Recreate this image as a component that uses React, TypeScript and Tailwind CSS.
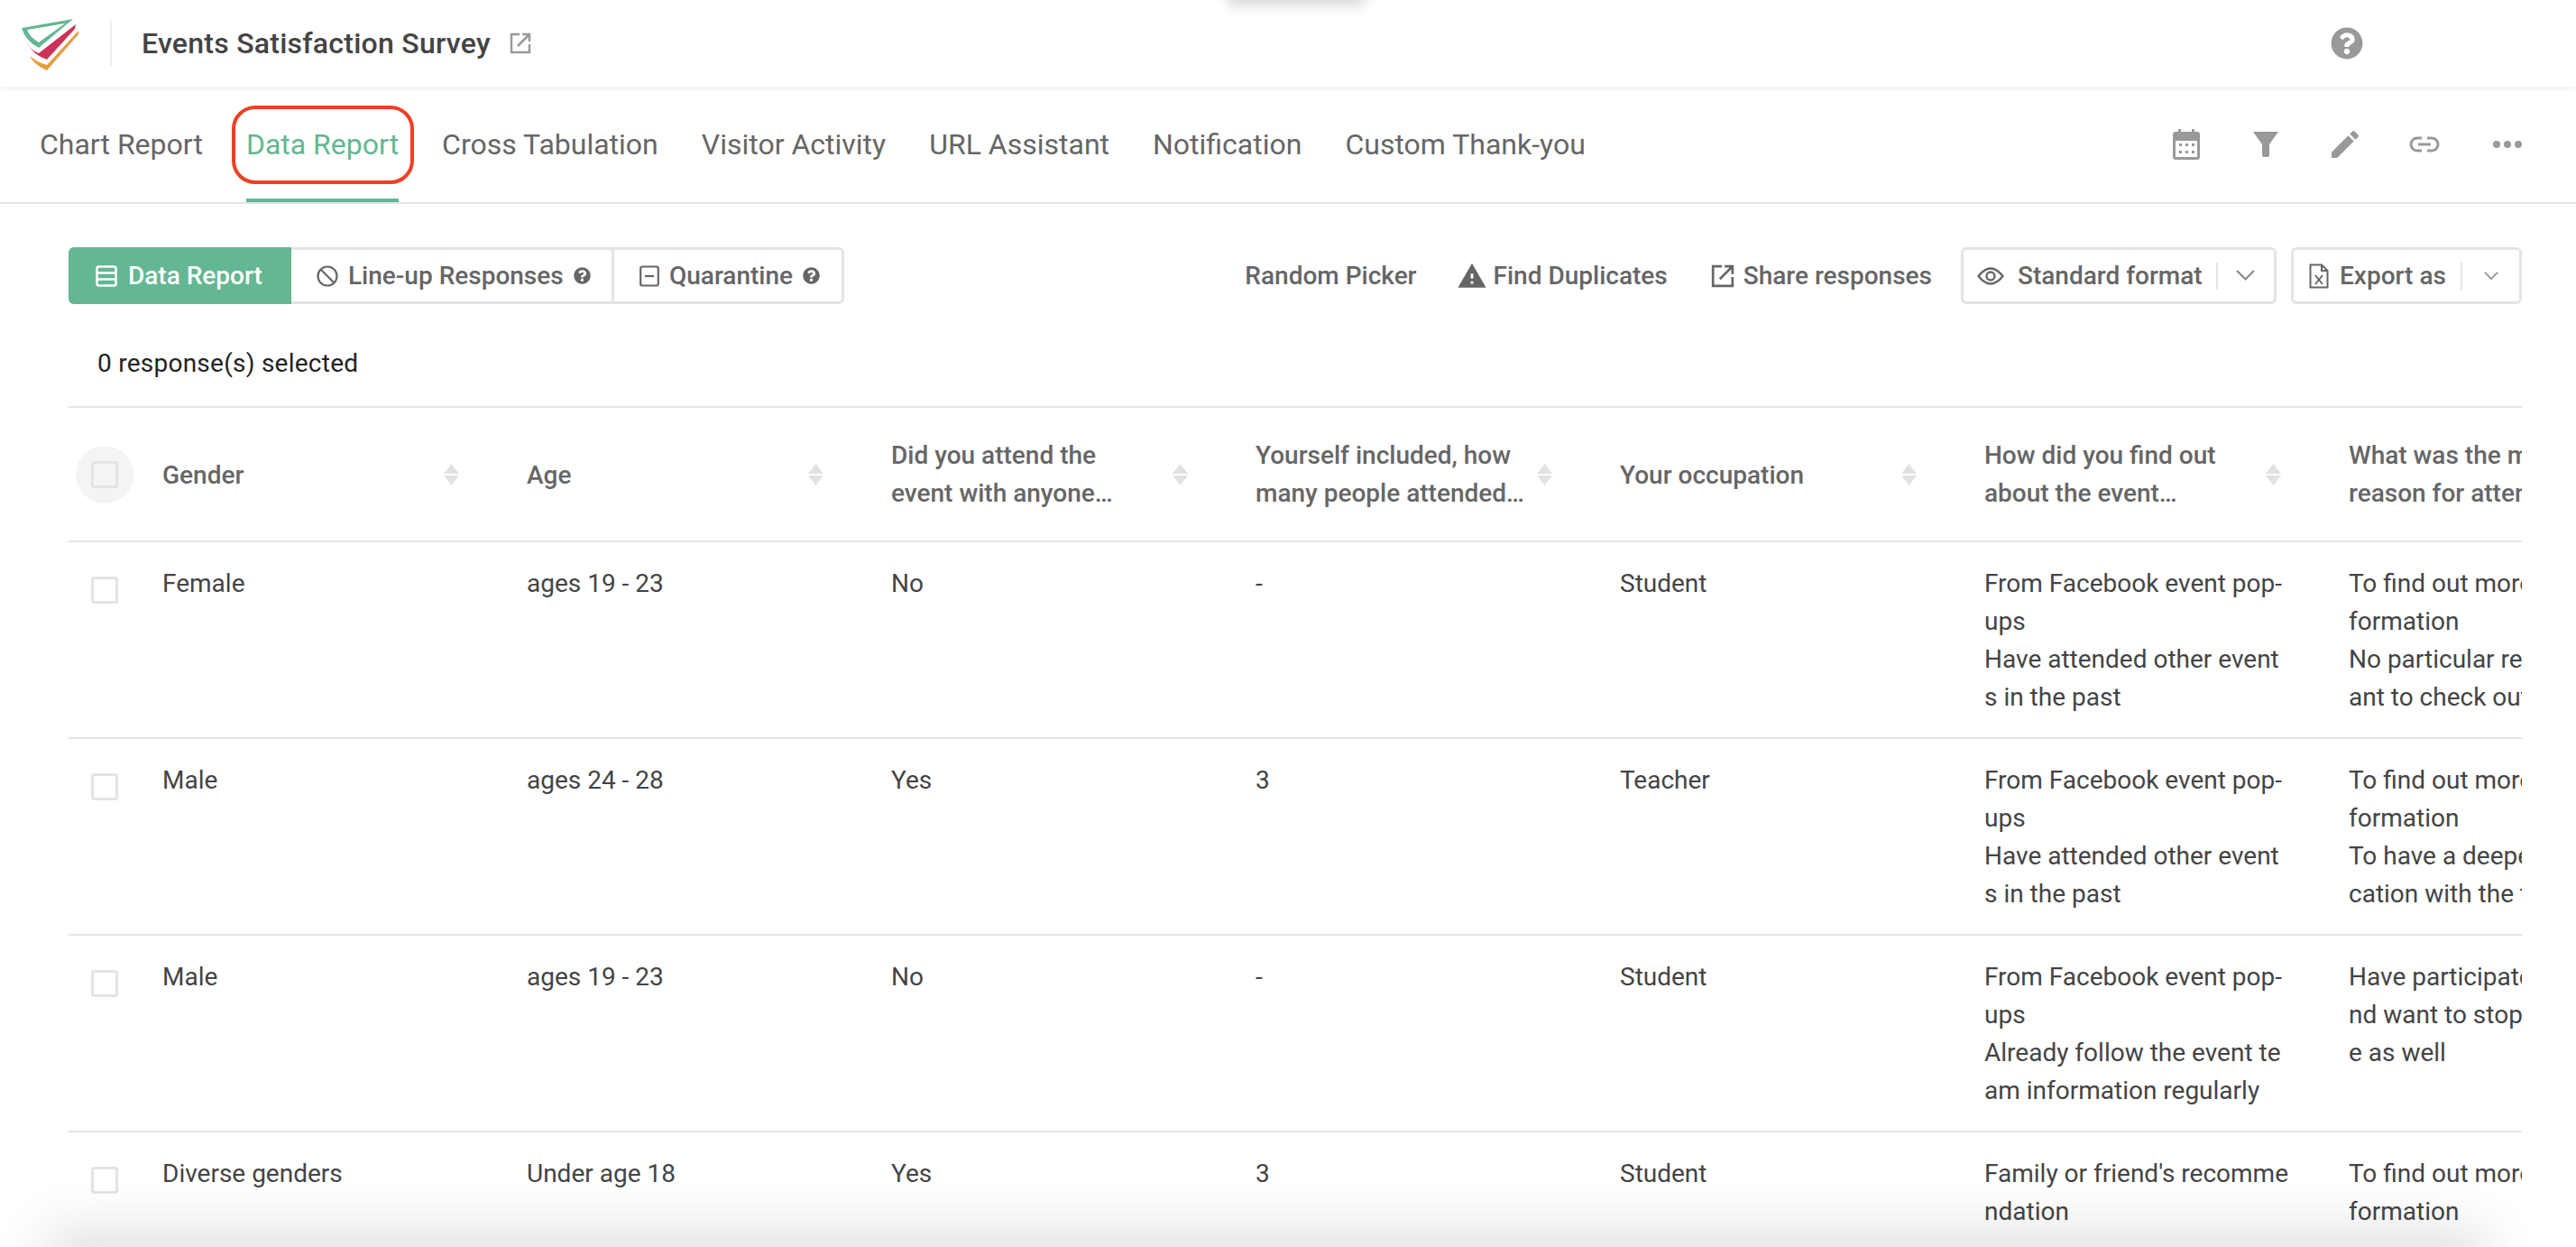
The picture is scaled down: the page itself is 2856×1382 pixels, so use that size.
import { FaQuestionCircle } from "react-icons/fa";
import { MdWarning, MdEdit } from "react-icons/md";

const tabs = ["Chart Report", "Data Report", "Cross Tabulation", "Visitor Activity", "URL Assistant", "Notification", "Custom Thank-you"];

const columns = [
  ["Gender"],
  ["Age"],
  ["Did you attend the", "event with anyone…"],
  ["Yourself included, how", "many people attended…"],
  ["Your occupation"],
  ["How did you find out", "about the event…"],
  ["What was the main", "reason for attending"],
];

const rows = [
  ["Female", "ages 19 - 23", "No", "-", "Student", ["From Facebook event pop-", "ups", "Have attended other event", "s in the past"], ["To find out more in", "formation", "No particular reason, I w", "ant to check out"]],
  ["Male", "ages 24 - 28", "Yes", "3", "Teacher", ["From Facebook event pop-", "ups", "Have attended other event", "s in the past"], ["To find out more in", "formation", "To have a deeper communi", "cation with the team"]],
  ["Male", "ages 19 - 23", "No", "-", "Student", ["From Facebook event pop-", "ups", "Already follow the event te", "am information regularly"], ["Have participated before a", "nd want to stop by this tim", "e as well"]],
  ["Diverse genders", "Under age 18", "Yes", "3", "Student", ["Family or friend's recomme", "ndation"], ["To find out more in", "formation"]],
];

function Logo() {
  return (
    <svg width="66" height="60" viewBox="0 0 66 60" className="mt-[4px] shrink-0">
      <path d="M0 11 L57 1 L19 33 Q4 25 0 11 Z M6 13 Q9 21 19 27 L48 6 Z" fill="#63b792" fillRule="evenodd" />
      <path d="M5 27 Q9 35 19 39 L60 7 L59 12 L28 46 Q13 41 5 27 Z" fill="#cb3358" />
      <path d="M9 42 Q17 49 28 52 L63 14 L63 18 L28 58 Q14 52 9 42 Z" fill="#e59c3f" />
    </svg>
  );
}

function ExternalIcon({ className }: { className: string }) {
  return (
    <svg viewBox="0 0 24 24" className={className} fill="none" stroke="currentColor" strokeWidth="2.5">
      <path d="M11 2 H2 V22 H22 V13" />
      <path d="M9 15 L21 3 M14 2 H22 V10" />
    </svg>
  );
}

function CalendarIcon() {
  return (
    <svg width="30" height="34" viewBox="0 0 30 34" fill="#999">
      <path fillRule="evenodd" d="M6 0 H9 V3 H21 V0 H24 V3 H27 Q30 3 30 6 V31 Q30 34 27 34 H3 Q0 34 0 31 V6 Q0 3 3 3 H6 Z M3 13 V31 H27 V13 Z" />
      <path d="M7 16 H10 V19 H7 Z M14 16 H17 V19 H14 Z M21 16 H24 V19 H21 Z M7 24 H10 V27 H7 Z M14 24 H17 V27 H14 Z M21 24 H24 V27 H21 Z" />
    </svg>
  );
}

function FilterIcon() {
  return (
    <svg width="28" height="28" viewBox="0 0 28 28" fill="#999">
      <path d="M0 0 H28 L18 14 V26 Q18 28 16 28 H12 Q10 28 10 26 V14 Z" />
    </svg>
  );
}

function LinkIcon() {
  return (
    <svg width="34" height="18" viewBox="0 0 34 18" fill="none" stroke="#999" strokeWidth="3">
      <path d="M14 2 H9 A7 7 0 0 0 9 16 H14 M20 2 H25 A7 7 0 0 1 25 16 H20" />
      <path d="M10 9 H24" />
    </svg>
  );
}

function DotsIcon() {
  return (
    <svg width="32" height="10" viewBox="0 0 32 10" fill="#999">
      <circle cx="4" cy="5" r="4" />
      <circle cx="16" cy="5" r="4" />
      <circle cx="28" cy="5" r="4" />
    </svg>
  );
}

function SortArrows() {
  return (
    <svg width="17" height="24" viewBox="0 0 17 24" fill="#e2e2e2" className="shrink-0">
      <path d="M8.5 0 L17 11 H0 Z M0 13 H17 L8.5 24 Z" />
    </svg>
  );
}

function Checkbox() {
  return <div className="w-[30px] h-[30px] border-[3px] border-[#e4e4e4] rounded-[3px] bg-white" />;
}

function GridIcon() {
  return (
    <svg width="24" height="24" viewBox="0 0 24 24" fill="none" stroke="#fff" strokeWidth="2.5">
      <rect x="1.5" y="1.5" width="21" height="21" rx="2" />
      <path d="M1.5 8.5 H22.5 M1.5 15.5 H22.5" />
    </svg>
  );
}

function BanIcon() {
  return (
    <svg width="24" height="24" viewBox="0 0 24 24" fill="none" stroke="#666" strokeWidth="2.2">
      <circle cx="12" cy="12" r="10.5" />
      <path d="M5 5 L19 19" />
    </svg>
  );
}

function MinusBoxIcon() {
  return (
    <svg width="22" height="24" viewBox="0 0 22 24" fill="none" stroke="#666" strokeWidth="2.2">
      <rect x="1.2" y="1.5" width="19.6" height="21" rx="2" />
      <path d="M6 12 H16" />
    </svg>
  );
}

function EyeIcon() {
  return (
    <svg width="30" height="22" viewBox="0 0 30 22" fill="none" stroke="#666" strokeWidth="2.4">
      <path d="M1.5 11 Q15 -6 28.5 11 Q15 28 1.5 11 Z" />
      <circle cx="15" cy="11" r="4.5" />
    </svg>
  );
}

function XlsIcon() {
  return (
    <svg width="22" height="28" viewBox="0 0 22 28" fill="none" stroke="#666" strokeWidth="2">
      <path d="M1.5 1.5 H14 L20.5 8 V26.5 H1.5 Z M14 1.5 V8 H20.5" />
      <path d="M7 13 L15 23 M15 13 L7 23" />
    </svg>
  );
}

function Chevron({ size }: { size: number }) {
  return (
    <svg width={size} height={size * 0.6} viewBox="0 0 20 12" fill="none" stroke="#888" strokeWidth="2">
      <path d="M1 1 L10 10 L19 1" />
    </svg>
  );
}

export default function App() {
  return (
    <div className="relative h-[1382px] w-[2856px] overflow-hidden bg-white font-[family-name:Roboto,sans-serif]">
      {/* top bar */}
      <header className="flex h-[96px] items-center shadow-[0_3px_6px_rgba(0,0,0,0.06)]">
        <div className="ml-6 flex items-center">
          <Logo />
          <div className="ml-[32px] h-[50px] w-[2px] bg-[#eeeeee]" />
        </div>
        <h1 className="ml-[33px] text-[32px] font-medium tracking-[0.25px] text-[#444]">Events Satisfaction Survey</h1>
        <ExternalIcon className="ml-[21px] h-6 w-6 text-[#999]" />
        <FaQuestionCircle className="ml-auto mr-[236px] text-[36px] text-[#999]" />
      </header>

      {/* tabs */}
      <nav className="flex h-[130px] items-stretch justify-between border-b-2 border-[#e4e4e4] pl-[44px] pr-[60px]">
        <div className="flex gap-12">
          {tabs.map((t) => (
            <div key={t} className={t === "Data Report" ? "relative flex items-center border-b-4 border-[#63b792] pt-[4px] text-[32px] text-[#63b792]" : "flex items-center border-b-4 border-transparent pt-[4px] text-[32px] text-[#666]"}>
              {t}
              {t === "Data Report" && <div className="absolute left-[-16px] top-[21px] h-[87px] w-[202px] rounded-[26px] border-4 border-[#ee4023]" />}
            </div>
          ))}
        </div>
        <div className="flex items-center">
          <CalendarIcon />
          <div className="ml-[59px]"><FilterIcon /></div>
          <MdEdit className="ml-[54px] text-[40px] text-[#999]" />
          <div className="ml-[51px]"><LinkIcon /></div>
          <div className="ml-[59px]"><DotsIcon /></div>
        </div>
      </nav>

      {/* toolbar */}
      <div className="ml-[76px] mr-[60px] mt-[48px] flex h-[63px] items-center justify-between text-[28px] font-medium text-[#666]">
        <div className="flex h-full w-[860px] rounded-[6px] border-[3px] border-[#e4e4e4]">
          <div className="-my-[3px] -ml-[3px] flex w-[247px] items-center gap-[12px] rounded-l-[6px] bg-[#63b792] pl-[30px] text-white">
            <GridIcon />
            Data Report
          </div>
          <div className="flex w-[358px] items-center gap-[11px] border-r-[3px] border-[#e4e4e4] pl-[28px]">
            <BanIcon />
            Line-up Responses
            <FaQuestionCircle className="text-[19px]" />
          </div>
          <div className="flex items-center gap-[11px] pl-[28px]">
            <MinusBoxIcon />
            Quarantine
            <FaQuestionCircle className="text-[19px]" />
          </div>
        </div>
        <div className="flex h-full items-center">
          <span>Random Picker</span>
          <MdWarning className="ml-[44px] text-[34px]" />
          <span className="ml-[7px]">Find Duplicates</span>
          <ExternalIcon className="ml-[48px] h-[26px] w-[26px]" />
          <span className="ml-[10px]">Share responses</span>
          <div className="ml-[32px] flex h-full w-[350px] items-center rounded-[6px] border-[3px] border-[#e4e4e4] pl-[15px]">
            <EyeIcon />
            <span className="ml-[15px]">Standard format</span>
            <div className="ml-[15px] h-[30px] w-[2px] bg-[#e4e4e4]" />
            <span className="ml-[20px]"><Chevron size={21} /></span>
          </div>
          <div className="ml-[16px] flex h-full w-[256px] items-center rounded-[6px] border-[3px] border-[#e4e4e4] pl-[17px]">
            <XlsIcon />
            <span className="ml-[12px]">Export as</span>
            <div className="ml-[16px] h-[30px] w-[2px] bg-[#e4e4e4]" />
            <span className="ml-[24px]"><Chevron size={16} /></span>
          </div>
        </div>
      </div>

      <p className="ml-[108px] mt-[45px] text-[28px] leading-[42px] tracking-[0.25px] text-[#222]">0 response(s) selected</p>

      {/* table */}
      <div className="ml-[76px] mt-[26px] w-[2720px] overflow-hidden">
        <div className="flex h-[151px] w-max items-center border-y-2 border-[#e4e4e4]">
          <div className="flex w-[104px] justify-start pl-[8px]">
            <div className="flex h-[64px] w-[64px] items-center justify-center rounded-full bg-[#f4f4f4]">
              <div className="h-[30px] w-[30px] rounded-[3px] border-[3px] border-[#e4e4e4]" />
            </div>
          </div>
          {columns.map((lines, i) => (
            <div key={i} className="flex w-[404px] items-center">
              <div className={lines.length === 1 ? "w-[312px] pt-[2px] text-[28px] font-medium leading-[42px] text-[#666]" : "w-[312px] text-[28px] font-medium leading-[42px] text-[#666]"}>
                {lines.map((l) => <div key={l} className="whitespace-nowrap">{l}</div>)}
              </div>
              <SortArrows />
            </div>
          ))}
        </div>
        {rows.map((row, r) => (
          <div key={r} className="flex h-[218px] w-max border-b-2 border-[#e4e4e4] pt-[25px]">
            <div className="w-[104px] pl-[25px] pt-[13px]"><Checkbox /></div>
            {row.map((cell, c) => (
              <div key={c} className="w-[404px] text-[28px] leading-[42px] text-[#444]">
                {(Array.isArray(cell) ? cell : [cell]).map((l, k) => <div key={k} className="whitespace-nowrap">{l}</div>)}
              </div>
            ))}
          </div>
        ))}
      </div>

      {/* window shadows */}
      <div className="absolute left-[1367px] top-[-20px] h-[20px] w-[140px] shadow-[0_0_14px_6px_rgba(0,0,0,0.16)]" />
      <div className="absolute bottom-[-40px] left-[70px] right-[120px] h-[40px] shadow-[0_0_60px_20px_rgba(0,0,0,0.12)]" />
    </div>
  );
}
